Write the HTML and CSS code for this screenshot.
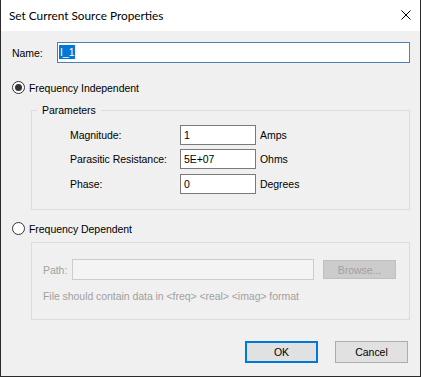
FILE: index.html
```html
<!DOCTYPE html>
<html lang="en">
<head>
  <meta charset="UTF-8">
  <title>Set Current Source Properties</title>
  <link rel="stylesheet" href="styles.css">
</head>
<body>
  <div class="window">
    <div class="titlebar">
      <span class="title">Set Current Source Properties</span>
      <svg class="close" width="10" height="10" viewBox="0 0 10 10">
        <path d="M0.5 0.5 L9.5 9.5 M9.5 0.5 L0.5 9.5" stroke="#000" stroke-width="1" fill="none"/>
      </svg>
    </div>
    <div class="content">
      <div class="name-row">
        <label for="name">Name:</label>
        <div class="edit focused" id="name"><span class="sel">I_1</span></div>
      </div>

      <div class="radio-row first">
        <span class="radio checked"></span>
        <span>Frequency Independent</span>
      </div>

      <fieldset class="group params">
        <legend>Parameters</legend>
        <div class="param-rows">
          <div class="param">
            <span class="plabel">Magnitude:</span>
            <div class="edit small">1</div>
            <span class="unit">Amps</span>
          </div>
          <div class="param">
            <span class="plabel">Parasitic Resistance:</span>
            <div class="edit small">5E+07</div>
            <span class="unit">Ohms</span>
          </div>
          <div class="param">
            <span class="plabel">Phase:</span>
            <div class="edit small">0</div>
            <span class="unit">Degrees</span>
          </div>
        </div>
      </fieldset>

      <div class="radio-row second">
        <span class="radio"></span>
        <span>Frequency Dependent</span>
      </div>

      <fieldset class="group file disabled">
        <div class="path-row">
          <span class="path-label">Path:</span>
          <div class="edit path"></div>
          <div class="btn browse">Browse...</div>
        </div>
        <div class="hint">File should contain data in &lt;freq&gt; &lt;real&gt; &lt;imag&gt; format</div>
      </fieldset>

      <div class="buttons">
        <div class="btn default">OK</div>
        <div class="btn">Cancel</div>
      </div>
    </div>
  </div>
</body>
</html>
```

FILE: styles.css
```css
body {
  margin: 0;
  font-family: "Liberation Sans", Arial, sans-serif;
  font-size: 10.5px;
  letter-spacing: -0.05px;
  color: #000;
}
.window {
  width: 421px;
  height: 377px;
  box-sizing: border-box;
  border: 1px solid #2b2b2b;
  border-top: none;
  display: flex;
  flex-direction: column;
  background: #f0f0f0;
}
.titlebar {
  height: 31px;
  background: #fff;
  display: flex;
  align-items: center;
  justify-content: space-between;
  padding: 0 9px 0 8px;
  flex-shrink: 0;
}
.title {
  font-family: Lato, sans-serif;
  font-size: 11.8px;
  letter-spacing: 0;
  margin-top: -1px;
}
.close {
  margin-top: -2px;
}
.content {
  flex: 1;
  padding: 0 10px 0 11px;
}
.name-row {
  display: flex;
  align-items: center;
  margin-top: 11px;
}
.name-row label {
  width: 45px;
}
.edit {
  box-sizing: border-box;
  background: #fff;
  border: 1px solid #7a7a7a;
  height: 20px;
  line-height: 18px;
  padding-left: 3px;
}
.edit.focused {
  flex: 1;
  height: 21px;
  line-height: 19px;
  border-color: #4f7fb0;
  padding-left: 1px;
}
.sel {
  background: #0078d7;
  color: #fff;
  padding: 1px 1px;
}
.radio-row {
  display: flex;
  align-items: center;
  height: 13px;
}
.radio-row.first {
  margin-top: 18px;
}
.radio-row.second {
  margin-top: 12px;
}
.radio {
  width: 13px;
  height: 13px;
  box-sizing: border-box;
  border: 1px solid #333;
  border-radius: 50%;
  background: #fff;
  margin-right: 4px;
  display: flex;
  align-items: center;
  justify-content: center;
}
.radio.checked::after {
  content: "";
  width: 7px;
  height: 7px;
  border-radius: 50%;
  background: #333;
}
.group {
  margin: 0 0 0 19px;
  padding: 0;
  border: 1px solid #dcdcdc;
  min-width: 0;
}
.params {
  margin-top: 10px;
}
.params legend {
  margin-left: 5px;
  padding: 0 5px;
  line-height: 13px;
}
.param-rows {
  display: flex;
  flex-direction: column;
  gap: 4px;
  padding: 8px 0 15px 38px;
}
.param {
  display: flex;
  align-items: center;
}
.param:last-child {
  margin-top: 1px;
}
.plabel {
  width: 110px;
}
.edit.small {
  width: 76px;
}
.unit {
  margin-left: 4px;
}
.file {
  margin-top: 7px;
  padding: 16px 13px 16px 11px;
}
.disabled {
  color: #a0a0a0;
}
.path-row {
  display: flex;
  align-items: center;
}
.path-label {
  width: 29px;
}
.edit.path {
  width: 242px;
  height: 21px;
  border-color: #cccccc;
  background: #f4f4f4;
}
.btn {
  box-sizing: border-box;
  width: 73px;
  height: 22px;
  background: #e1e1e1;
  border: 1px solid #adadad;
  display: flex;
  align-items: center;
  justify-content: center;
}
.btn.browse {
  height: 19px;
  margin-left: 9px;
  background: #cccccc;
  border-color: #bfbfbf;
  color: #a0a0a0;
}
.hint {
  margin-top: 10px;
  line-height: 13px;
}
.buttons {
  display: flex;
  justify-content: flex-end;
  gap: 17px;
  margin: 21px 2px 0 0;
}
.btn.default {
  border: 2px solid #0078d7;
}
```
